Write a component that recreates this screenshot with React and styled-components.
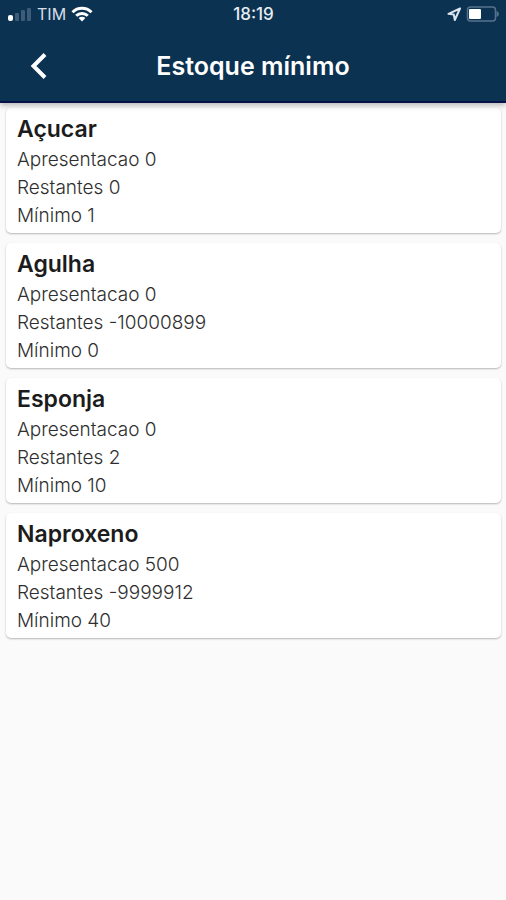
import React, { Component } from 'react';
import styled, { createGlobalStyle } from 'styled-components';

const colors = {
  navy: '#0c3252',
  navyEdge: '#06114a',
  white: '#ffffff',
  background: '#fafafa',
  title: '#1c1c1c',
  text: '#2e2e2e',
  faded: '#3d5c79',
};

const GlobalStyle = createGlobalStyle`
  * {
    box-sizing: border-box;
  }
  body {
    margin: 0;
    background-color: ${colors.background};
    font-family: Inter, Roboto, sans-serif;
  }
`;

const Container = styled.div`
  min-height: 100vh;
  background-color: ${colors.background};
`;

const Header = styled.header`
  position: relative;
  background-color: ${colors.navy};
  border-bottom: 2px solid ${colors.navyEdge};
  box-shadow: 0 2px 6px rgba(0, 0, 0, 0.3);
  color: ${colors.white};
`;

const StatusBar = styled.div`
  display: grid;
  grid-template-columns: 1fr auto 1fr;
  align-items: center;
  height: 28px;
  padding: 0 7px 0 8px;
`;

const StatusGroup = styled.div`
  display: flex;
  align-items: center;
  justify-content: ${props => (props.$end ? 'flex-end' : 'flex-start')};
  gap: 5px;
`;

const Carrier = styled.span`
  font-size: 16px;
  line-height: 20px;
  color: #d5dee7;
`;

const Clock = styled.time`
  font-size: 17px;
  font-weight: 500;
  line-height: 20px;
  color: #e6edf3;
`;

const NavBar = styled.div`
  display: grid;
  grid-template-columns: 78px 1fr 78px;
  align-items: center;
  height: 73px;
  padding-top: 2px;
`;

const BackButton = styled.button`
  display: flex;
  align-items: center;
  justify-content: center;
  height: 56px;
  padding: 0;
  border: 0;
  background: none;
  color: inherit;
  cursor: pointer;
`;

const PageTitle = styled.h1`
  margin: 0;
  font-size: 25px;
  font-weight: 600;
  line-height: 32px;
  text-align: center;
`;

const List = styled.ul`
  display: flex;
  flex-direction: column;
  gap: 10px;
  margin: 0;
  padding: 5px 5px 10px 6px;
  list-style: none;
`;

const Card = styled.li`
  padding: 7px 11px 3px;
  border-radius: 5px;
  background-color: ${colors.white};
  box-shadow: 0 1px 2px rgba(0, 0, 0, 0.28);
`;

const ItemName = styled.h2`
  margin: 0 0 3px;
  font-size: 23px;
  font-weight: 600;
  line-height: 28px;
  color: ${colors.title};
`;

const Detail = styled.p`
  margin: 0;
  font-size: 19px;
  font-weight: 300;
  line-height: 28px;
  color: ${colors.text};
`;

const SignalIcon = () => (
  <svg width="24" height="16" viewBox="0 0 24 16" aria-hidden="true">
    <rect x="0" y="9" width="5" height="6" rx="2" fill={colors.white} />
    <rect x="7" y="7" width="4" height="8" rx="1" fill={colors.faded} />
    <rect x="13" y="4" width="4" height="11" rx="1" fill={colors.faded} />
    <rect x="19" y="2" width="4" height="13" rx="1" fill={colors.faded} />
  </svg>
);

const WifiIcon = () => (
  <svg width="22" height="16" viewBox="0 0 22 16" aria-hidden="true">
    <g fill="none" stroke={colors.white} strokeWidth="3">
      <path d="M1.5 6.2a13.5 13.5 0 0 1 19 0" />
      <path d="M5.2 9.8a8.3 8.3 0 0 1 11.6 0" />
    </g>
    <path d="M11 15.5 7.6 12.1a4.9 4.9 0 0 1 6.8 0z" fill={colors.white} />
  </svg>
);

const LocationIcon = () => (
  <svg width="14" height="14" viewBox="0 0 14 14" aria-hidden="true">
    <path
      d="M13 1.5 1.5 6.8 6.8 7.6 7.8 13z"
      fill="none"
      stroke="#dce5ed"
      strokeWidth="2"
      strokeLinejoin="round"
    />
  </svg>
);

const BatteryIcon = () => (
  <svg width="33" height="16" viewBox="0 0 33 16" aria-hidden="true">
    <rect x="1.5" y="1" width="28" height="14" rx="3" fill="none" stroke="#56738d" strokeWidth="1.5" />
    <rect x="3" y="3" width="12" height="10" rx="1" fill={colors.white} />
    <path d="M31 5.5v5a3 3 0 0 0 0-5z" fill="#56738d" stroke="#56738d" />
  </svg>
);

const BackIcon = () => (
  <svg width="20" height="28" viewBox="0 0 20 28" aria-hidden="true">
    <path d="M16 2.5 4.5 14 16 25.5" fill="none" stroke={colors.white} strokeWidth="4" />
  </svg>
);

const products = [
  { name: 'Açucar', apresentacao: 0, restantes: 0, minimo: 1 },
  { name: 'Agulha', apresentacao: 0, restantes: -10000899, minimo: 0 },
  { name: 'Esponja', apresentacao: 0, restantes: 2, minimo: 10 },
  { name: 'Naproxeno', apresentacao: 500, restantes: -9999912, minimo: 40 },
];

class App extends Component {
  handleBack() {
    window.history.back();
  }

  render() {
    return (
      <Container>
        <GlobalStyle />
        <Header>
          <StatusBar>
            <StatusGroup>
              <SignalIcon />
              <Carrier>TIM</Carrier>
              <WifiIcon />
            </StatusGroup>
            <Clock>18:19</Clock>
            <StatusGroup $end>
              <LocationIcon />
              <BatteryIcon />
            </StatusGroup>
          </StatusBar>
          <NavBar>
            <BackButton type="button" aria-label="Voltar" onClick={() => this.handleBack()}>
              <BackIcon />
            </BackButton>
            <PageTitle>Estoque mínimo</PageTitle>
          </NavBar>
        </Header>
        <List>
          {products.map(item => (
            <Card key={item.name}>
              <ItemName>{item.name}</ItemName>
              <Detail>Apresentacao {item.apresentacao}</Detail>
              <Detail>Restantes {item.restantes}</Detail>
              <Detail>Mínimo {item.minimo}</Detail>
            </Card>
          ))}
        </List>
      </Container>
    );
  }
}

export default App;
